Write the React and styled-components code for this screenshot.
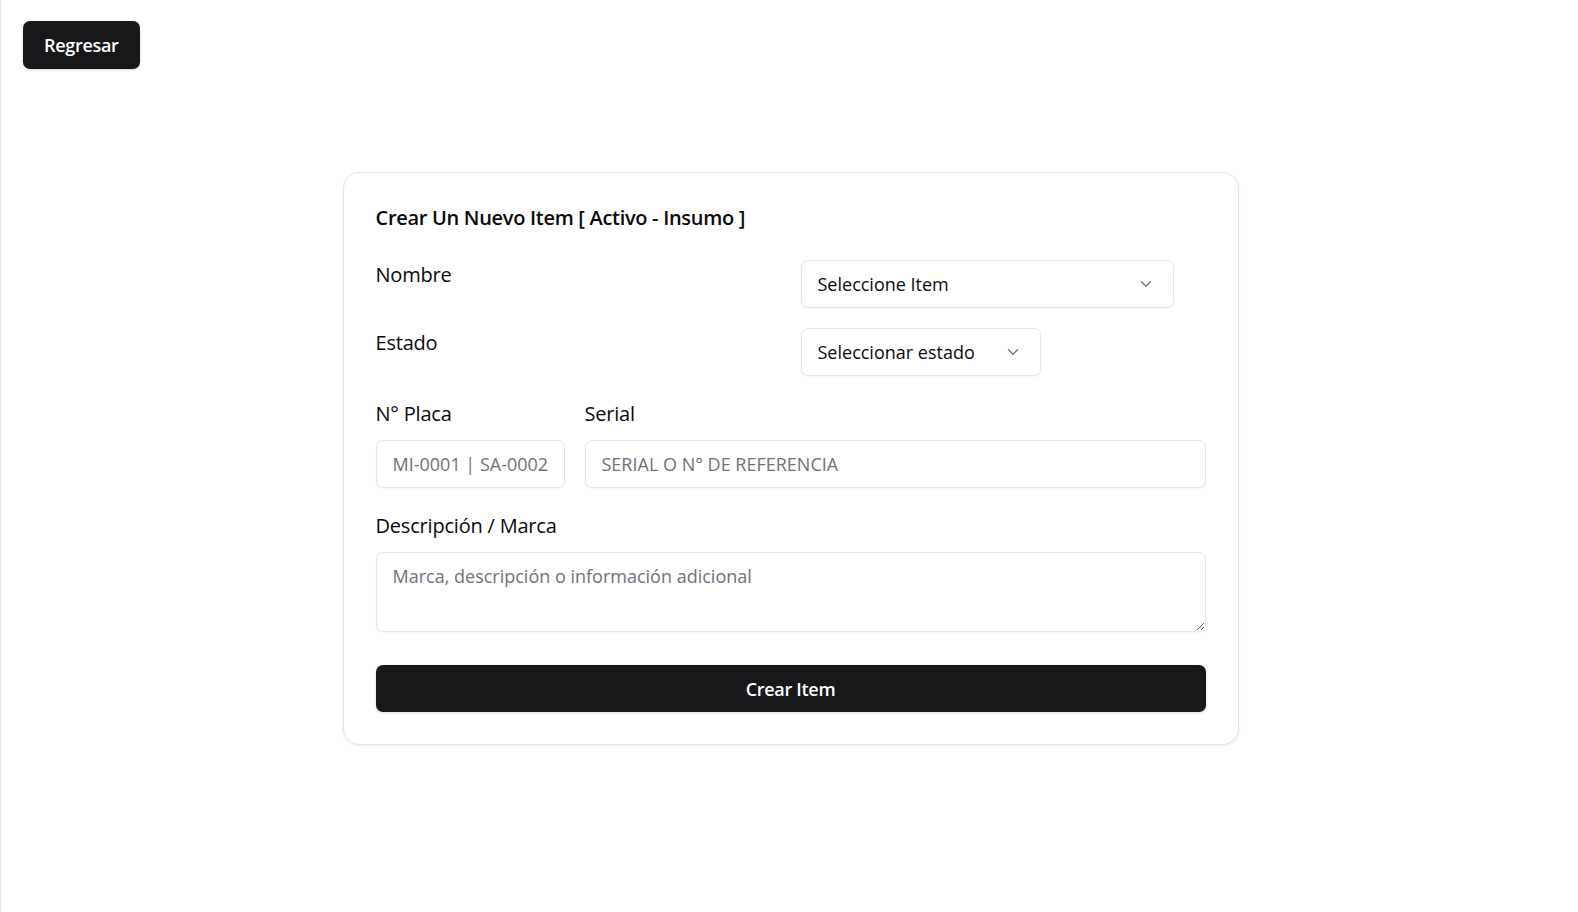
import styled, { createGlobalStyle } from "styled-components";
import { ChevronDown } from "lucide-react";

const GlobalStyle = createGlobalStyle`
  * { box-sizing: border-box; }
  body {
    margin: 0;
    background: #ffffff;
    font-family: "Open Sans", "Noto Sans", sans-serif;
    color: #09090b;
  }
`;

const Page = styled.div`
  min-height: 912px;
  border-left: 1px solid #e4e4e7;
  padding: 21px 0 0 22px;
`;

const BackButton = styled.button`
  height: 48px;
  padding: 0 21px;
  border: none;
  border-radius: 7px;
  background: #18181b;
  color: #fff;
  font-family: inherit;
  font-size: 18px;
  font-weight: 600;
  letter-spacing: -0.3px;
  box-shadow: 0 1px 3px rgba(0, 0, 0, 0.15);
  cursor: pointer;
`;

const Center = styled.div`
  display: flex;
  justify-content: center;
  padding-top: 103px;
  padding-right: 20px;
`;

const Card = styled.div`
  width: 896px;
  padding: 32px;
  border: 1px solid #e4e4e7;
  border-radius: 16px;
  background: #fff;
  box-shadow: 0 1px 3px rgba(0, 0, 0, 0.08);
`;

const Title = styled.h2`
  margin: 0 0 29px;
  font-size: 20px;
  line-height: 26px;
  font-weight: 600;
  letter-spacing: -0.3px;
`;

const Form = styled.form`
  display: flex;
  flex-direction: column;
`;

const Row = styled.div`
  display: grid;
  grid-template-columns: 1fr 1fr;
  column-gap: 20px;
  margin-bottom: ${(p) => p.$mb || 0}px;
`;

const Label = styled.label`
  display: block;
  font-size: 20px;
  line-height: 30px;
  letter-spacing: -0.2px;
  color: #09090b;
`;

const Select = styled.button`
  display: flex;
  align-items: center;
  justify-content: space-between;
  width: ${(p) => p.$w}px;
  height: 48px;
  padding: 0 18px 0 16px;
  border: 1px solid #e4e4e7;
  border-radius: 7px;
  background: #fff;
  font-family: inherit;
  font-size: 18px;
  color: #09090b;
  box-shadow: 0 1px 2px rgba(0, 0, 0, 0.04);
  svg {
    color: #71717a;
  }
`;

const FieldRow = styled.div`
  display: flex;
  gap: 20px;
  margin-top: 23px;
`;

const Field = styled.div`
  display: flex;
  flex-direction: column;
  gap: 11px;
  flex: ${(p) => (p.$w ? `0 0 ${p.$w}px` : "1")};
`;

const Input = styled.input`
  height: 48px;
  width: 100%;
  padding: 0 16px;
  border: 1px solid #e4e4e7;
  border-radius: 7px;
  font-family: inherit;
  font-size: 18px;
  color: #09090b;
  box-shadow: 0 1px 2px rgba(0, 0, 0, 0.04);
  &::placeholder { color: #71717a; }
`;

const TextArea = styled.textarea`
  height: 80px;
  width: 100%;
  padding: 10px 16px;
  border: 1px solid #e4e4e7;
  border-radius: 7px;
  font-family: inherit;
  font-size: 18px;
  line-height: 26px;
  box-shadow: 0 1px 2px rgba(0, 0, 0, 0.04);
  &::placeholder { color: #71717a; }
`;

const Submit = styled.button`
  margin-top: 33px;
  height: 47px;
  border: none;
  border-radius: 7px;
  background: #18181b;
  color: #fff;
  font-family: inherit;
  font-size: 18px;
  font-weight: 600;
  letter-spacing: -0.3px;
  box-shadow: 0 1px 3px rgba(0, 0, 0, 0.15);
  cursor: pointer;
`;

const App = () => {
  return (
    <Page>
      <GlobalStyle />
      <BackButton>Regresar</BackButton>
      <Center>
        <Card>
          <Title>Crear Un Nuevo Item [ Activo - Insumo ]</Title>
          <Form onSubmit={(e) => e.preventDefault()}>
            <Row $mb={20}>
              <Label>Nombre</Label>
              <Select type="button" $w={373}>
                <span>Seleccione Item</span>
                <ChevronDown size={18} strokeWidth={1.75} />
              </Select>
            </Row>
            <Row>
              <Label>Estado</Label>
              <Select type="button" $w={240}>
                <span>Seleccionar estado</span>
                <ChevronDown size={18} strokeWidth={1.75} />
              </Select>
            </Row>
            <FieldRow>
              <Field $w={189}>
                <Label>N° Placa</Label>
                <Input placeholder="MI-0001 | SA-0002" />
              </Field>
              <Field>
                <Label>Serial</Label>
                <Input placeholder="SERIAL O N° DE REFERENCIA" />
              </Field>
            </FieldRow>
            <FieldRow>
              <Field>
                <Label>Descripción / Marca</Label>
                <TextArea placeholder="Marca, descripción o información adicional" />
              </Field>
            </FieldRow>
            <Submit type="submit">Crear Item</Submit>
          </Form>
        </Card>
      </Center>
    </Page>
  );
};

export default App;
